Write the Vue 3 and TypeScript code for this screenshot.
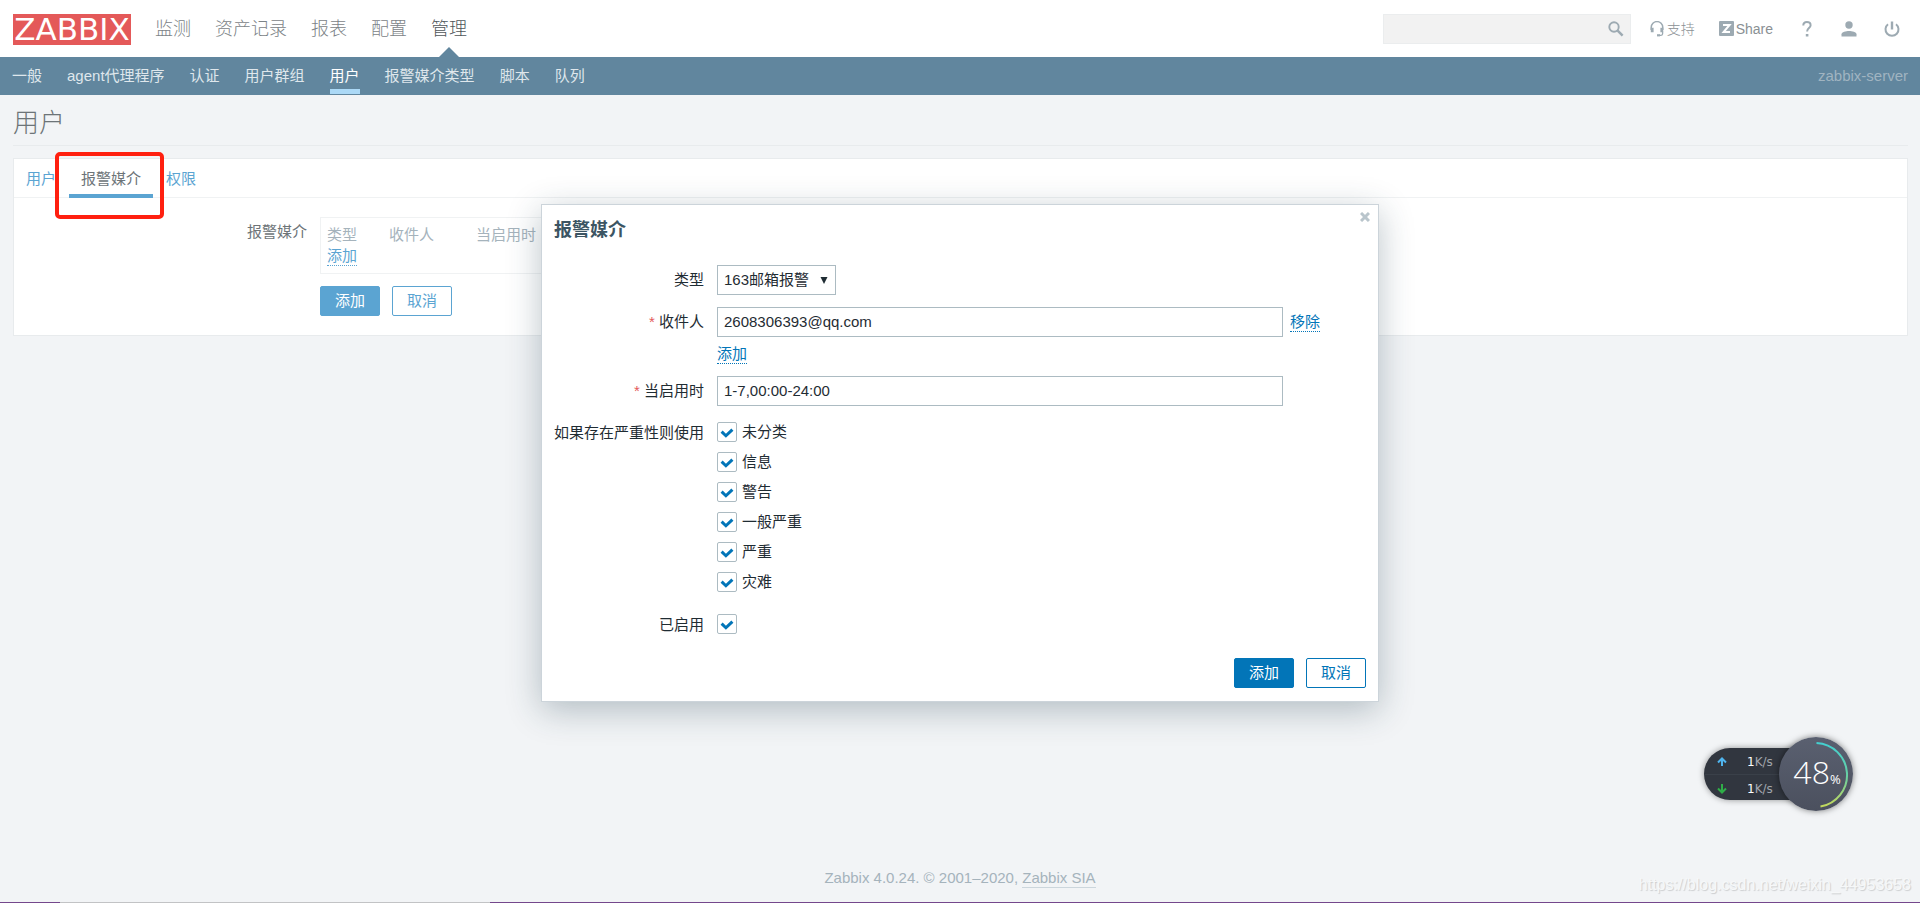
<script setup lang="ts">
import { ref } from 'vue'

interface Severity {
  id: string
  label: string
  on: boolean
}

const mainNav = ['监测', '资产记录', '报表', '配置', '管理']
const activeMain = '管理'
const subNav = ['一般', 'agent代理程序', '认证', '用户群组', '用户', '报警媒介类型', '脚本', '队列']
const activeSub = '用户'
const tabs = ['用户', '报警媒介', '权限']
const activeTab = ref('报警媒介')

const search = ref('')
const sendTo = ref('2608306393@qq.com')
const period = ref('1-7,00:00-24:00')
const mediaType = ref('163邮箱报警')
const enabled = ref(true)
const severities = ref<Severity[]>([
  { id: 'sev0', label: '未分类', on: true },
  { id: 'sev1', label: '信息', on: true },
  { id: 'sev2', label: '警告', on: true },
  { id: 'sev3', label: '一般严重', on: true },
  { id: 'sev4', label: '严重', on: true },
  { id: 'sev5', label: '灾难', on: true },
])
</script>

<template>
  <div class="page">
    <header class="top">
      <a class="logo" href="#">ZABBIX</a>
      <nav class="main-nav">
        <a v-for="n in mainNav" :key="n" href="#" :class="{ active: n === activeMain }">{{ n }}</a>
      </nav>
      <div class="tools">
        <form class="search" @submit.prevent>
          <input v-model="search" type="text" aria-label="搜索" />
          <button type="submit" aria-label="搜索">
            <svg width="16" height="16" viewBox="0 0 16 16" fill="none" stroke="#9daab2">
              <circle cx="6" cy="6" r="4.7" stroke-width="1.9" />
              <path d="M9.4 9.4L14.6 14.6" stroke-width="2.5" />
            </svg>
          </button>
        </form>
        <a class="tool support" href="#">
          <svg width="14" height="16" viewBox="0 0 14 16" fill="none" stroke="#9daab2">
            <path d="M1.2 9V6.4a5.6 5.6 0 0 1 11.6 0V9" stroke-width="1.5" />
            <path d="M2.2 6.8v4.4M11.8 6.8v4.4" stroke-width="2.8" />
            <path d="M12.600 10.500v2.300q0 1.500-1.600 1.500H9" stroke-width="1.300" />
            <path d="M7 14.300h3" stroke-width="2.200" />
          </svg>
          <span>支持</span>
        </a>
        <a class="tool share" href="#">
          <svg width="15" height="15" viewBox="0 0 15 15">
            <rect width="15" height="15" rx="1" fill="#9daab2" />
            <path d="M4 3.900h6.600L4.600 11.100H11" fill="none" stroke="#fff" stroke-width="2" />
          </svg>
          <span>Share</span>
        </a>
        <a class="tool help" href="#" aria-label="帮助">
          <svg width="10" height="16" viewBox="0 0 10 16" fill="none" stroke="#9daab2" stroke-width="2">
            <path d="M1.300 4.600C1.300 2.400 2.800 1.100 4.900 1.100s3.700 1.200 3.700 3.200c0 2.800-3.500 2.900-3.500 6.200" />
            <path d="M5.100 13v2.500" stroke-width="2.600" />
          </svg>
        </a>
        <a class="tool user" href="#" aria-label="用户资料">
          <svg width="16" height="16" viewBox="0 0 16 16" fill="#9daab2">
            <circle cx="8" cy="4" r="3.700" />
            <path d="M.5 15.500v-2.300C.5 10.900 5 10 8 10s7.500.9 7.500 3.200v2.300z" />
          </svg>
        </a>
        <a class="tool power" href="#" aria-label="退出">
          <svg width="16" height="16" viewBox="0 0 16 16" fill="none" stroke="#9daab2" stroke-width="2">
            <path d="M4 3.200a6.500 6.500 0 1 0 8 0" />
            <path d="M8 .5v8" stroke-width="2.400" />
          </svg>
        </a>
      </div>
    </header>

    <nav class="sub">
      <a v-for="n in subNav" :key="n" href="#" :class="{ active: n === activeSub }">{{ n }}</a>
      <span class="server">zabbix-server</span>
    </nav>

    <main class="content">
      <h1>用户</h1>
      <section class="card">
        <div class="tabs">
          <div v-for="t in tabs" :key="t" class="tab" :class="{ active: t === activeTab }">
            <a href="#" @click.prevent="activeTab = t">{{ t }}</a>
            <span v-if="t === '报警媒介'" class="marker"></span>
          </div>
        </div>
        <div class="media">
          <span class="media-label">报警媒介</span>
          <div>
            <div class="media-box">
              <table>
                <thead>
                  <tr><th>类型</th><th>收件人</th><th>当启用时</th></tr>
                </thead>
                <tbody>
                  <tr><td colspan="3"><a class="dotted" href="#">添加</a></td></tr>
                </tbody>
              </table>
            </div>
            <div class="actions">
              <button type="button" class="btn primary">添加</button>
              <button type="button" class="btn">取消</button>
            </div>
          </div>
        </div>
      </section>
    </main>

    <footer class="footer">Zabbix 4.0.24. © 2001–2020, <a href="#">Zabbix SIA</a></footer>
    <div class="watermark">https://blog.csdn.net/weixin_44953658</div>
    <div class="strip"><i class="s1"></i><i class="s2"></i><i class="s3"></i></div>

    <div class="dialog" role="dialog" aria-labelledby="dlg-title">
      <button type="button" class="close" aria-label="关闭">
        <svg width="10" height="10" viewBox="0 0 10 10" stroke="#b9c5cc" stroke-width="3">
          <path d="M1 1L9 9M9 1L1 9" />
        </svg>
      </button>
      <h4 id="dlg-title">报警媒介</h4>
      <form class="form" @submit.prevent>
        <label for="type">类型</label>
        <div class="field">
          <span class="select">
            <select id="type" v-model="mediaType">
              <option>163邮箱报警</option>
            </select>
            <svg width="8" height="7" viewBox="0 0 8 7" fill="#1f2c33"><path d="M.5 0h7L4 7z" /></svg>
          </span>
        </div>

        <label for="sendto"><b>*</b> 收件人</label>
        <div class="field">
          <div class="line">
            <input id="sendto" v-model="sendTo" class="text" type="text" />
            <a class="dotted" href="#">移除</a>
          </div>
          <div class="add"><a class="dotted" href="#">添加</a></div>
        </div>

        <label for="period"><b>*</b> 当启用时</label>
        <div class="field"><input id="period" v-model="period" class="text" type="text" /></div>

        <span class="group-label">如果存在严重性则使用</span>
        <div class="field">
          <label v-for="s in severities" :key="s.id" class="check" :for="s.id">
            <span class="box">
              <input :id="s.id" v-model="s.on" type="checkbox" />
              <svg v-if="s.on" width="20" height="20" viewBox="0 0 20 20" fill="none" stroke="#0275b8" stroke-width="3">
                <path d="M4.600 9.700L8.900 13.800L15.400 7.600" />
              </svg>
            </span>
            {{ s.label }}
          </label>
        </div>

        <label for="enabled">已启用</label>
        <div class="field check">
          <span class="box">
            <input id="enabled" v-model="enabled" type="checkbox" />
            <svg v-if="enabled" width="20" height="20" viewBox="0 0 20 20" fill="none" stroke="#0275b8" stroke-width="3">
              <path d="M4.600 9.700L8.900 13.800L15.400 7.600" />
            </svg>
          </span>
        </div>
      </form>
      <div class="dialog-actions">
        <button type="button" class="btn primary">添加</button>
        <button type="button" class="btn">取消</button>
      </div>
    </div>

    <aside class="meter">
      <div class="pill">
        <div class="rate">
          <svg width="10" height="10" viewBox="0 0 10 10" fill="none" stroke="#4fb4ee" stroke-width="2"><path d="M5 9V2M1 5.500L5 1.500L9 5.500" /></svg>
          <span><b>1</b>K/s</span>
        </div>
        <div class="rate">
          <svg width="10" height="10" viewBox="0 0 10 10" fill="none" stroke="#2fae48" stroke-width="2"><path d="M5 0V8M1 4.500L5 8.500L9 4.500" /></svg>
          <span><b>1</b>K/s</span>
        </div>
      </div>
      <div class="dial">
        <svg width="76" height="76" viewBox="0 0 76 76" fill="none">
          <defs>
            <linearGradient id="arc" x1="0" y1="0" x2="0" y2="1">
              <stop offset="0" stop-color="#43d0d0" />
              <stop offset=".5" stop-color="#66cfa5" />
              <stop offset="1" stop-color="#c3d95c" />
            </linearGradient>
          </defs>
          <path d="M37.500 6A32 32 0 0 1 41.500 69.500" stroke="url(#arc)" stroke-width="2" />
        </svg>
        <span class="value">48<small>%</small></span>
      </div>
    </aside>
  </div>
</template>

<style>
body {
  margin: 0;
  background: #f2f4f6;
}
</style>

<style scoped>
.page {
  position: relative;
  display: flex;
  flex-direction: column;
  min-height: 100vh;
  font: 400 15px/20px "Liberation Sans", "Noto Sans CJK SC", sans-serif;
  color: #6d7478;
}
.page * {
  box-sizing: border-box;
}
a {
  color: #5ba4d2;
  text-decoration: none;
}
input,
select,
button {
  font: inherit;
  margin: 0;
}
svg {
  display: block;
}

.top {
  display: flex;
  align-items: center;
  height: 57px;
  padding: 0 20px 0 13px;
  background: #fff;
}
.logo {
  width: 118px;
  height: 31px;
  margin-top: 2px;
  background: #e45959;
  color: #fff;
  font: 400 31px/31px "DejaVu Sans", sans-serif;
  text-align: center;
}
.main-nav {
  display: flex;
  align-self: stretch;
  gap: 24px;
  margin-left: 24px;
  font-size: 18px;
  font-weight: 300;
  line-height: 58px;
}
.main-nav a {
  position: relative;
  color: #7c8387;
}
.main-nav a.active {
  color: #4f565a;
}
.main-nav a.active::after {
  content: "";
  position: absolute;
  left: 50%;
  bottom: 0;
  margin-left: -10px;
  border: 10px solid transparent;
  border-top: 0;
  border-bottom-color: #61869e;
}
.tools {
  display: flex;
  align-items: center;
  margin-left: auto;
  font-size: 14px;
  font-weight: 300;
}
.tool {
  display: flex;
  align-items: center;
  color: #8a9094;
}
.search {
  display: flex;
  align-items: center;
  width: 248px;
  height: 30px;
  margin-right: 19px;
  border: 1px solid #ebedee;
  background: #f2f2f2;
}
.search input {
  flex: 1;
  min-width: 0;
  height: 100%;
  padding: 0 6px;
  border: 0;
  background: none;
}
.search button {
  margin-right: 6px;
  padding: 0;
  border: 0;
  background: none;
}
.support {
  gap: 3px;
  margin-right: 24px;
}
.share {
  gap: 2px;
  margin-right: 29px;
}
.help {
  margin-right: 29px;
}
.user {
  margin-right: 27px;
}

.sub {
  display: flex;
  gap: 25px;
  height: 38px;
  padding: 0 12px;
  background: #61869e;
  line-height: 37px;
}
.sub a {
  position: relative;
  color: #dfe7ec;
}
.sub a.active {
  color: #fff;
}
.sub a.active::after {
  content: "";
  position: absolute;
  left: 0;
  right: 0;
  bottom: 1px;
  height: 5px;
  background: #acd9f6;
}
.server {
  margin-left: auto;
  color: #a0b4c1;
}

.content {
  padding: 0 12px 0 13px;
}
h1 {
  height: 51px;
  margin: 0;
  border-bottom: 1px solid #e8ebed;
  font-size: 26px;
  font-weight: 300;
  line-height: 56px;
}
.card {
  margin-top: 12px;
  border: 1px solid #e8ebed;
  background: #fff;
}
.tabs {
  display: flex;
  gap: 1px;
  height: 39px;
  border-bottom: 1px solid #f0f2f3;
}
.tab {
  position: relative;
  height: 39px;
  padding: 0 12px;
  line-height: 39px;
}
.tab.active {
  border-bottom: 4px solid #5ba4d2;
}
.tab.active a {
  color: #6d7478;
}
.marker {
  position: absolute;
  top: -7px;
  left: -14px;
  width: 109px;
  height: 67px;
  border: 4px solid #ff2010;
  border-radius: 5px;
  pointer-events: none;
}
.media {
  display: grid;
  grid-template-columns: 293px 1fr;
  column-gap: 13px;
  padding: 19px 0;
}
.media-label {
  padding-top: 5px;
  text-align: right;
}
.media-box {
  width: 720px;
  max-width: 100%;
  height: 57px;
  border: 1px solid #f0f2f3;
  padding: 6px;
}
table {
  border-collapse: collapse;
}
th,
td {
  padding: 0;
  font-weight: 400;
  line-height: 21px;
  text-align: left;
}
th {
  padding-right: 27px;
  color: #a5b3bc;
}
th:nth-child(1) {
  padding-right: 32px;
}
th:nth-child(2) {
  padding-right: 42px;
}
.dotted {
  display: inline-block;
  border-bottom: 1px dotted;
  line-height: 19px;
}
.actions {
  display: flex;
  gap: 12px;
  margin-top: 12px;
}
.btn {
  width: 60px;
  height: 30px;
  padding: 0;
  border: 1px solid #5ba4d2;
  border-radius: 2px;
  background: #fff;
  color: #5ba4d2;
}
.btn.primary {
  background: #5ba4d2;
  color: #fff;
}

.footer {
  margin-top: auto;
  padding-bottom: 14px;
  color: #a5b3bc;
  text-align: center;
}
.footer a {
  display: inline-block;
  border-bottom: 1px solid #ccd6dc;
  color: inherit;
  line-height: 18px;
}
.watermark {
  position: absolute;
  right: 9px;
  bottom: 8px;
  color: #f6f8f9;
  font-size: 16px;
  text-shadow: 1px 1px 1px rgba(0, 0, 0, 0.16);
}
.strip {
  display: flex;
  height: 1px;
}
.s1 {
  width: 60px;
  background: #74478c;
}
.s2 {
  width: 430px;
  background: #c2c3c5;
}
.s3 {
  flex: 1;
  background: #74478c;
}

.dialog {
  position: absolute;
  top: 204px;
  left: 50%;
  width: 838px;
  margin-left: -419px;
  padding: 12px 12px 13px;
  border: 1px solid #ccd4da;
  background: #fff;
  box-shadow: 0 8px 32px rgba(31, 60, 75, 0.3);
  color: #1f2c33;
}
.close {
  position: absolute;
  top: 7px;
  right: 8px;
  padding: 0;
  border: 0;
  background: none;
}
h4 {
  margin: 0 0 22px;
  color: #3c5563;
  font-size: 18px;
  font-weight: 700;
  line-height: 26px;
}
.form {
  display: grid;
  grid-template-columns: 150px 1fr;
  gap: 12px 13px;
}
.form > label,
.group-label {
  line-height: 29px;
  text-align: right;
}
.form b {
  color: #e45959;
  font-weight: 400;
}
.select {
  display: inline-grid;
  align-items: center;
  vertical-align: top;
}
.select > * {
  grid-area: 1 / 1;
}
.select svg {
  justify-self: end;
  margin-right: 8px;
  pointer-events: none;
}
select {
  width: 119px;
  height: 30px;
  padding: 0 6px;
  appearance: none;
  border: 1px solid #acbbc2;
  border-radius: 0;
  background: #fff;
  color: inherit;
}
.line {
  display: flex;
  align-items: center;
  gap: 7px;
}
.text {
  width: 566px;
  height: 30px;
  padding: 0 6px 2px;
  border: 1px solid #acbbc2;
  background: #fff;
  color: inherit;
}
.add {
  height: 27px;
  padding-top: 7px;
}
.dialog .dotted {
  color: #0275b8;
}
.check {
  display: flex;
  align-items: center;
  gap: 5px;
  height: 30px;
  padding-bottom: 2px;
  line-height: 28px;
}
.box {
  display: grid;
}
.box > * {
  grid-area: 1 / 1;
}
.box input {
  width: 20px;
  height: 20px;
  appearance: none;
  border: 1px solid #acbbc2;
  border-radius: 2px;
  background: #fff;
}
.box svg {
  pointer-events: none;
}
.dialog-actions {
  display: flex;
  justify-content: flex-end;
  gap: 12px;
  margin-top: 18px;
}
.dialog .btn {
  border-color: #0275b8;
  color: #0275b8;
}
.dialog .btn.primary {
  background: #0275b8;
  color: #fff;
}

.meter {
  position: absolute;
  right: 67px;
  bottom: 92px;
  display: flex;
  align-items: center;
}
.pill {
  width: 100px;
  height: 52px;
  margin-right: -25px;
  border-radius: 26px 0 0 26px;
  background: #31363f;
  box-shadow: 0 0 6px rgba(0, 0, 0, 0.4);
}
.rate {
  display: flex;
  align-items: center;
  gap: 20px;
  height: 26px;
  padding: 2px 0 0 13px;
  color: #a2a6ad;
  font: 400 12px/24px "DejaVu Sans", sans-serif;
}
.rate + .rate {
  border-top: 1px solid #3a4049;
}
.rate b {
  color: #fff;
  font-weight: 400;
}
.dial {
  position: relative;
  display: grid;
  place-items: center;
  width: 74px;
  height: 74px;
  border-radius: 50%;
  background: linear-gradient(#5a6070, #4b505e);
  box-shadow: 0 0 6px rgba(0, 0, 0, 0.5);
}
.dial > * {
  grid-area: 1 / 1;
}
.value {
  color: #fff;
  font: 300 32px/40px "Open Sans", sans-serif;
}
.value small {
  font-size: 13px;
  font-weight: 400;
}
</style>
